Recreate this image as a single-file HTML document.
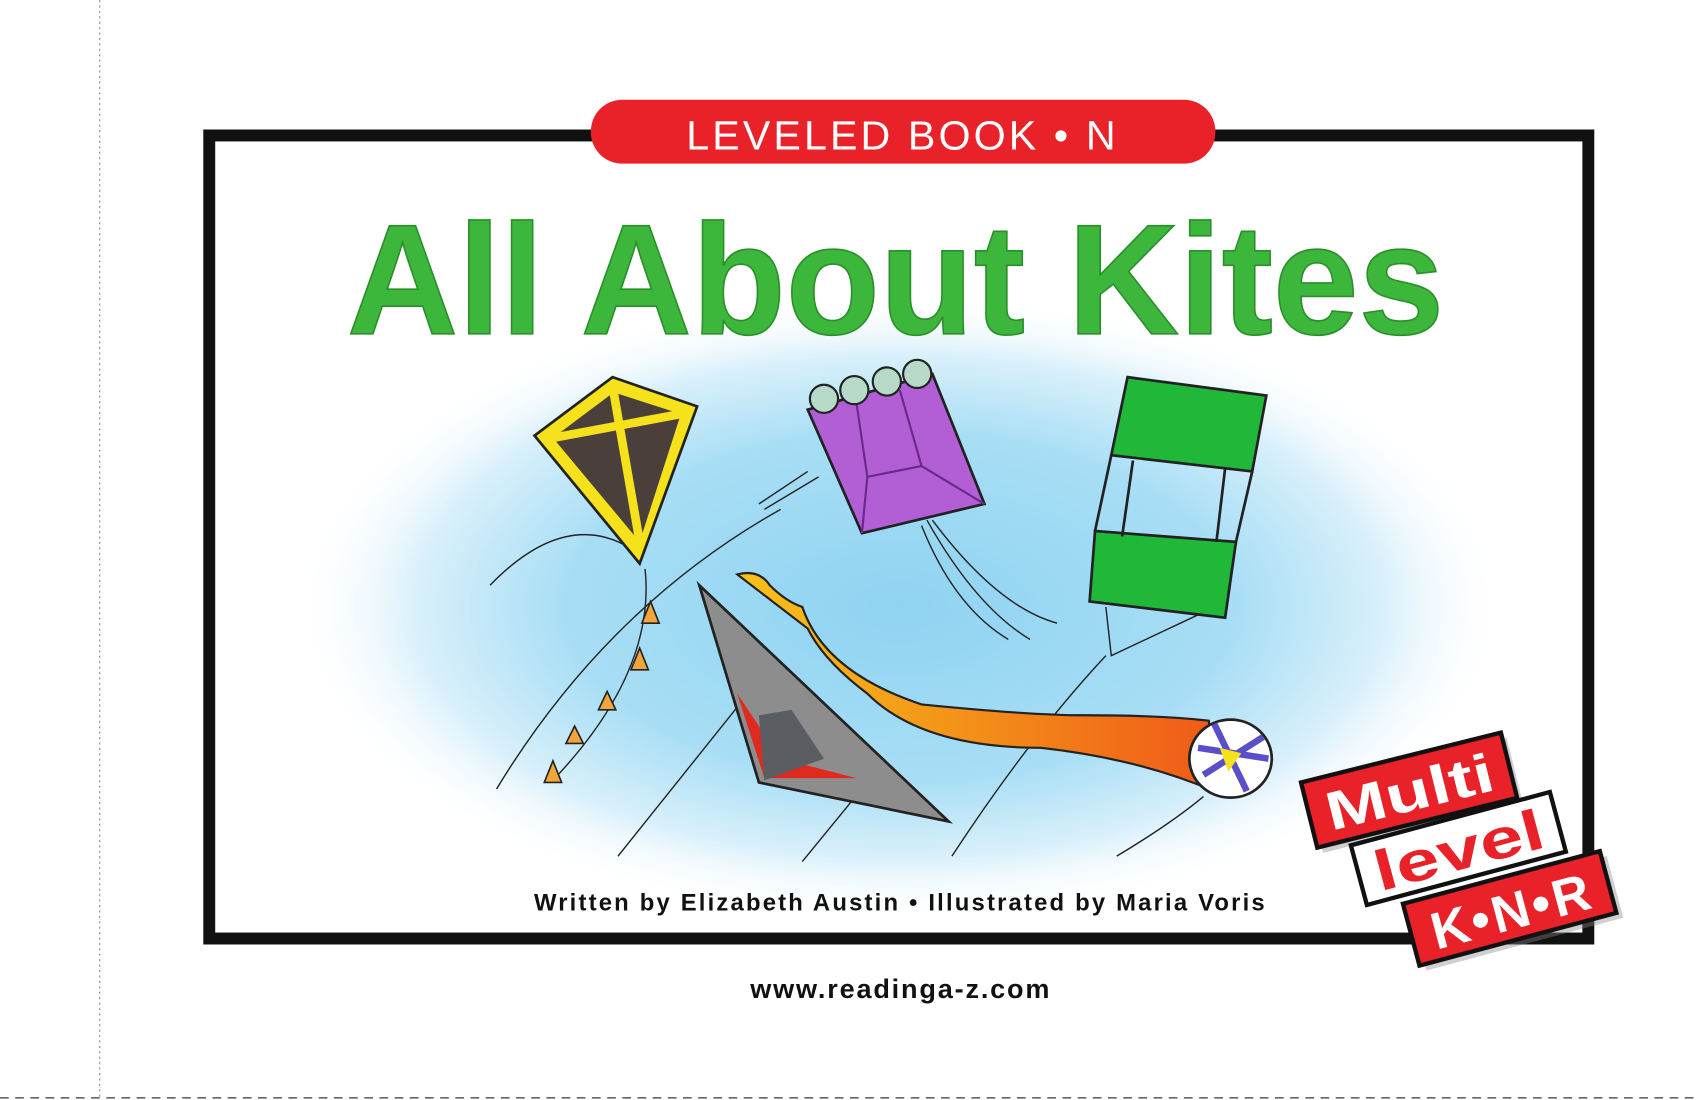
<!DOCTYPE html>
<html><head><style>
html,body{margin:0;padding:0;background:#fff;width:1700px;height:1100px;overflow:hidden}
svg{display:block}
</style></head><body>
<svg width="1700" height="1100" viewBox="0 0 1568 1015" preserveAspectRatio="none" xmlns="http://www.w3.org/2000/svg">
<defs>
<radialGradient id="sky" cx="0.5" cy="0.5" r="0.5">
<stop offset="0" stop-color="#8fd3f2"/>
<stop offset="0.55" stop-color="#a8def5"/>
<stop offset="0.8" stop-color="#d9f0fb"/>
<stop offset="1" stop-color="#fff" stop-opacity="0"/>
</radialGradient>
<linearGradient id="tail" x1="0" x2="1"><stop offset="0" stop-color="#f6c21a"/><stop offset="1" stop-color="#f05a18"/></linearGradient>
</defs>
<line x1="92" y1="0" x2="92" y2="1015" stroke="#888" stroke-width="1" stroke-dasharray="2,3"/>
<line x1="0" y1="1013" x2="1568" y2="1013" stroke="#666" stroke-width="1.5" stroke-dasharray="8,6"/>
<ellipse cx="830" cy="560" rx="560" ry="290" fill="url(#sky)"/>
<rect x="193" y="125" width="1272" height="741" fill="none" stroke="#111" stroke-width="11"/>
<rect x="545" y="92" width="576" height="59" rx="29" fill="#e82228"/>
<text x="833" y="138" text-anchor="middle" font-family="Liberation Sans, sans-serif" font-size="38" fill="#fff" letter-spacing="4" textLength="400">LEVELED BOOK • N</text>
<text x="826" y="308" text-anchor="middle" font-family="Liberation Sans, sans-serif" font-weight="bold" font-size="145" fill="#3db63c" stroke="#2a8f2a" stroke-width="1.5" textLength="1012" lengthAdjust="spacingAndGlyphs">All About Kites</text>
<g fill="none" stroke="#222" stroke-width="1.3">
<path d="M452,540 Q520,470 580,505"/>
<path d="M458,728 Q560,560 720,470"/>
<path d="M700,465 L745,435 M705,470 L755,440"/>
<path d="M570,790 L690,640"/><path d="M740,795 L785,740"/>
<path d="M878,790 Q950,680 1020,605"/><path d="M1030,790 Q1080,760 1110,735"/>
<path d="M1020,560 L1025,605 L1110,565"/>
<path d="M595,525 Q605,620 510,720"/>
<path d="M855,480 Q900,560 950,590 M860,480 Q920,560 975,575 M850,485 Q880,560 930,590"/>
</g>
<polygon points="565,348 643,375 590,520 493,402" fill="#f5e21c" stroke="#222" stroke-width="2.5"/>
<polygon points="566,362 628,382 590,500 510,404" fill="#4a3f3a"/>
<path d="M566,362 L590,500 M510,404 L628,382" stroke="#f5e21c" stroke-width="8"/>
<g fill="#f2a53a" stroke="#222" stroke-width="1.5">
<polygon points="600,555 608,575 592,575"/><polygon points="590,598 598,618 582,618"/>
<polygon points="560,638 568,655 552,655"/><polygon points="530,670 538,686 522,686"/><polygon points="510,702 518,722 502,722"/>
</g>
<polygon points="745,378 860,345 908,465 795,492" fill="#b25fd6" stroke="#222" stroke-width="2.5"/>
<path d="M790,372 L800,440 L795,492 M830,360 L850,430 L908,465 M800,440 L850,430" stroke="#6a2a8a" stroke-width="2" fill="none"/>
<g fill="#b7d9c8" stroke="#222" stroke-width="2"><circle cx="760" cy="368" r="13"/><circle cx="788" cy="360" r="13"/><circle cx="818" cy="352" r="13"/><circle cx="846" cy="345" r="13"/></g>
<g stroke="#222" stroke-width="2.5" fill="#21b83a">
<polygon points="1040,348 1168,365 1155,435 1025,420"/>
<polygon points="1010,490 1140,500 1130,570 1005,555"/>
<path d="M1025,420 L1010,490 M1155,435 L1140,500 M1045,425 L1035,495 M1130,432 L1122,500" fill="none"/>
</g>
<polygon points="645,540 875,758 700,722" fill="#8d8d8d" stroke="#222" stroke-width="2.5"/>
<polygon points="680,640 720,700 790,718 705,718" fill="#e02a20"/>
<polygon points="700,660 730,655 760,700 705,720" fill="#5a5d62"/>
<path d="M680,530 Q700,525 710,540 Q725,555 740,560 Q760,620 850,650 Q950,660 1000,660 Q1070,660 1115,665 L1120,730 Q1050,700 960,690 Q850,690 800,640 Q760,610 745,580 Z" fill="url(#tail)" stroke="#222" stroke-width="2"/>
<ellipse cx="1135" cy="700" rx="38" ry="36" fill="#fff" stroke="#222" stroke-width="2.5"/>
<path d="M1105,690 L1170,700 M1120,668 L1150,730 M1110,715 L1165,680" stroke="#5a4fc8" stroke-width="6"/>
<polygon points="1125,690 1145,695 1133,712" fill="#f5e21c"/>
<text x="830" y="840" text-anchor="middle" font-family="Liberation Sans, sans-serif" font-weight="bold" font-size="22" fill="#111" textLength="675" letter-spacing="1">Written by Elizabeth Austin • Illustrated by Maria Voris</text>
<text x="830" y="921" text-anchor="middle" font-family="Liberation Sans, sans-serif" font-weight="bold" font-size="25" fill="#111" textLength="276">www.readinga-z.com</text>
<g transform="translate(1200,722) rotate(-14)">
<rect x="4" y="6" width="190" height="62" fill="#888" opacity="0.4"/>
<rect x="0" y="0" width="190" height="62" fill="#e82228" stroke="#111" stroke-width="4"/>
<text x="95" y="50" text-anchor="middle" font-family="Liberation Sans, sans-serif" font-weight="bold" font-size="50" fill="#fff" textLength="158" lengthAdjust="spacingAndGlyphs">Multi</text>
</g>
<g transform="translate(1246,780) rotate(-15)">
<rect x="0" y="0" width="190" height="57" fill="#fff" stroke="#111" stroke-width="4"/>
<text x="95" y="48" text-anchor="middle" font-family="Liberation Sans, sans-serif" font-weight="bold" font-size="52" fill="#e82228" textLength="160" lengthAdjust="spacingAndGlyphs">level</text>
</g>
<g transform="translate(1294,834) rotate(-15)">
<rect x="5" y="6" width="188" height="59" fill="#888" opacity="0.4"/>
<rect x="0" y="0" width="188" height="59" fill="#e82228" stroke="#111" stroke-width="4"/>
<text x="94" y="49" text-anchor="middle" font-family="Liberation Sans, sans-serif" font-weight="bold" font-size="48" fill="#fff" textLength="150">K•N•R</text>
</g>
</svg>
</body></html>
